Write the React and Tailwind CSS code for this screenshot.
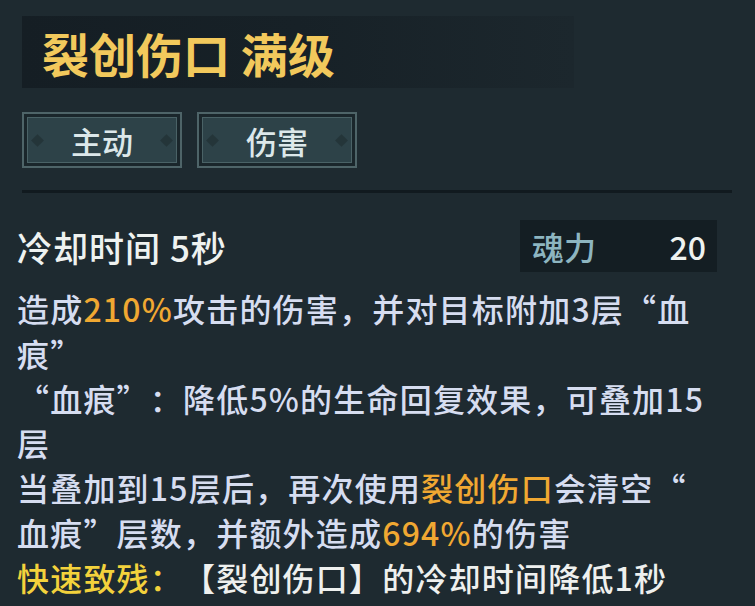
import React from "react";

const FONT = { fontFamily: '"Noto Sans CJK SC", "Noto Sans", sans-serif' };

function Tag({ label }) {
  return (
    <div className="w-[160px] h-[56px] border-2 border-[#4e6468] p-[3px] bg-[#1a262b]">
      <div className="h-full border border-[#4a6266] bg-[#2d4248] flex items-center justify-between px-[5px]">
        <span className="w-[9px] h-[9px] rotate-45 bg-[#243539]" />
        <span className="text-[31px] leading-none text-[#dce8ea] font-medium">{label}</span>
        <span className="w-[9px] h-[9px] rotate-45 bg-[#243539]" />
      </div>
    </div>
  );
}

const O = ({ children }) => <span className="text-[#f0a832]">{children}</span>;

export default function App() {
  return (
    <div
      className="w-[755px] h-[606px] overflow-hidden bg-[#1e2a30] flex flex-col [text-spacing-trim:space-all]"
      style={FONT}
    >
      {/* title */}
      <div className="mt-[16px] ml-[22px] w-[552px] h-[72px] flex items-center pl-[20px] bg-gradient-to-r from-[#151e24] via-[#172127] to-[#1c272d]">
        <span className="text-[47px] font-bold text-[#f2c95c] leading-none">
          裂创伤口&nbsp;满级
        </span>
      </div>

      {/* tags */}
      <div className="mt-[24px] ml-[22px] flex gap-[15px]">
        <Tag label="主动" />
        <Tag label="伤害" />
      </div>

      {/* divider */}
      <div className="mt-[22px] ml-[22px] w-[710px] h-[3px] bg-[#111a1f]" />

      {/* cooldown + cost */}
      <div className="mt-[27px] flex items-center justify-between pl-[17px] pr-[38px]">
        <span className="text-[35px] leading-none tracking-[1px] text-[#eef2f0] font-medium">冷却时间 5秒</span>
        <div className="w-[197px] h-[52px] bg-[#141e23] flex items-center justify-between pl-[12px] pr-[11px]">
          <span className="text-[32px] leading-none text-[#8db5c0] font-medium">魂力</span>
          <span className="text-[32px] leading-none text-[#eef2f0] font-medium">20</span>
        </div>
      </div>

      {/* description */}
      <div className="mt-[14px] pl-[17px] text-[32px] leading-[44.8px] tracking-[1.2px] font-medium text-[#d6ddf0] whitespace-nowrap">
        <div>
          造成<O>210%</O>攻击的伤害，并对目标附加3层“血
        </div>
        <div>痕”</div>
        <div>“血痕”：降低5%的生命回复效果，可叠加15</div>
        <div>层</div>
        <div>
          当叠加到15层后，再次使用<O>裂创伤口</O>会清空“
        </div>
        <div>
          血痕”层数，并额外造成<O>694%</O>的伤害
        </div>
        <div className="text-[#eef0ee]">
          <span className="text-[#f3d23c]">快速致残：</span>【裂创伤口】的冷却时间降低1秒
        </div>
      </div>
    </div>
  );
}
